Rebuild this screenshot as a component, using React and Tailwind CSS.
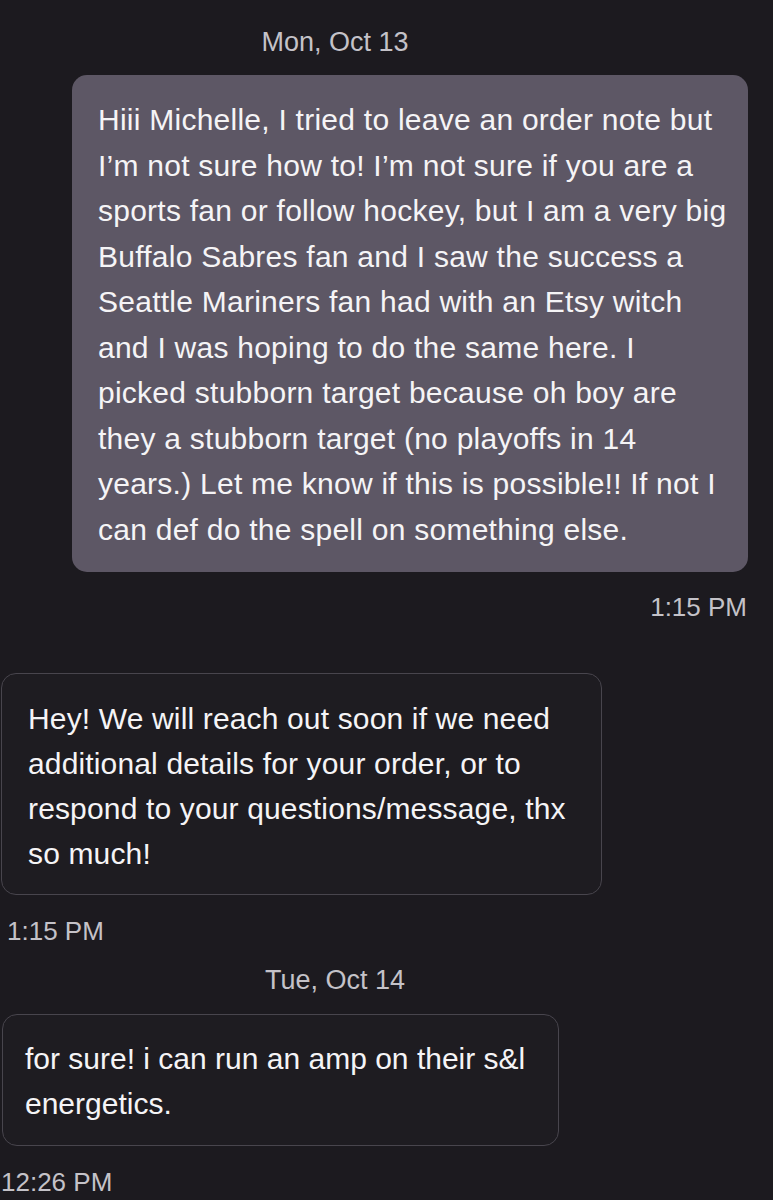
const outgoing = [
  'Hiii Michelle, I tried to leave an order note but',
  'I’m not sure how to! I’m not sure if you are a',
  'sports fan or follow hockey, but I am a very big',
  'Buffalo Sabres fan and I saw the success a',
  'Seattle Mariners fan had with an Etsy witch',
  'and I was hoping to do the same here. I',
  'picked stubborn target because oh boy are',
  'they a stubborn target (no playoffs in 14',
  'years.) Let me know if this is possible!! If not I',
  'can def do the spell on something else.',
]

const reply1 = [
  'Hey! We will reach out soon if we need',
  'additional details for your order, or to',
  'respond to your questions/message, thx',
  'so much!',
]

const reply2 = ['for sure! i can run an amp on their s&l', 'energetics.']

function DateLabel({ children }) {
  return <div className="text-center text-[27px] leading-[32px] text-[#c4c2c8] pr-[103px]">{children}</div>
}

function Lines({ lines }) {
  return lines.map((l, i) => (
    <div key={i} className="whitespace-nowrap">
      {l}
    </div>
  ))
}

export default function App() {
  return (
    <div
      className="w-[773px] h-[1200px] overflow-hidden bg-[#1c1a1f] text-[#f5f4f6]"
      style={{ fontFamily: '"Liberation Sans", Arial, sans-serif' }}
    >
      <div className="pt-[26px]">
        <DateLabel>Mon, Oct 13</DateLabel>
      </div>

      <div className="flex justify-end pr-[25px] mt-[17px]">
        <div className="w-[676px] rounded-[15px] bg-[#5d5765] pl-[26px] pr-[10px] pt-[22px] pb-[20px] text-[30px] leading-[45.5px] tracking-[0.25px]">
          <Lines lines={outgoing} />
        </div>
      </div>
      <div className="text-right pr-[26px] mt-[20px] text-[26px] leading-[30px] text-[#c4c2c8]">1:15 PM</div>

      <div className="mt-[51px] ml-[1px] w-[601px] rounded-[15px] border border-[#48454d] bg-[#1e1c21] pl-[26px] pt-[22px] pb-[18px] text-[30px] leading-[45px] tracking-[0.15px]">
        <Lines lines={reply1} />
      </div>
      <div className="pl-[7px] mt-[21px] text-[26px] leading-[30px] text-[#c4c2c8]">1:15 PM</div>

      <div className="mt-[18px]">
        <DateLabel>Tue, Oct 14</DateLabel>
      </div>

      <div className="mt-[18px] ml-[2px] w-[557px] rounded-[15px] border border-[#48454d] bg-[#1e1c21] pl-[22px] pt-[21px] pb-[19px] text-[30px] leading-[45px]">
        <Lines lines={reply2} />
      </div>
      <div className="pl-[1px] mt-[21px] text-[26px] leading-[30px] text-[#c4c2c8]">12:26 PM</div>
    </div>
  )
}
